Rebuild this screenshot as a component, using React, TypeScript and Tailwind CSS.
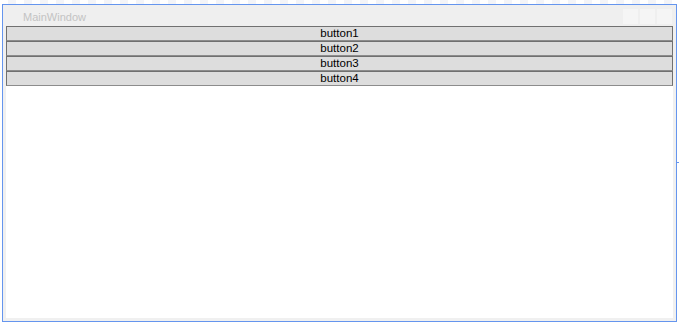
const BUTTONS = ["button1", "button2", "button3", "button4"];

export default function App() {
  return (
    <div
      className="relative w-[679px] h-[323px] bg-white overflow-hidden"
      style={{ fontFamily: '"Segoe UI", "Liberation Sans", Arial, sans-serif' }}
    >
      {/* desktop stripes above the window */}
      <div className="h-[4px] w-full bg-[repeating-linear-gradient(90deg,#ffffff_0px,#ffffff_8px,#f3f4f8_8px,#f3f4f8_16px)]" />

      <div className="flex">
        <div className="w-[2px] shrink-0" />
        {/* window */}
        <div className="w-[675px] h-[318px] border border-[#6595ee] bg-[#f0f0f0] flex flex-col">
          {/* title bar */}
          <div className="h-[21px] shrink-0 flex items-center justify-between bg-[#efefef]">
            <span className="ml-[20px] mt-[3px] text-[11px] leading-none text-[#c3c3c3]">MainWindow</span>
            <div className="flex gap-[2px] mr-[4px] mt-[4px] self-start">
              <div className="w-[15px] h-[15px] bg-[#f5f5f5]" />
              <div className="w-[15px] h-[15px] bg-[#f5f5f5]" />
              <div className="w-[15px] h-[15px] bg-[#f5f5f5]" />
            </div>
          </div>
          {/* client area */}
          <div className="flex-1 mx-[3px] mb-[3px] bg-white flex flex-col">
            {BUTTONS.map((b) => (
              <div
                key={b}
                className="h-[15px] border border-[#707070] border-b-[#8c8c8c] bg-[#dddddd] flex items-center justify-center pt-[1px] text-[11.5px] leading-none text-black"
              >
                {b}
              </div>
            ))}
          </div>
        </div>
      </div>

      {/* resize tick on the right edge */}
      <div className="absolute left-[676px] top-[162px] w-[3px] h-[1px] bg-[#6595ee]" />
    </div>
  );
}
